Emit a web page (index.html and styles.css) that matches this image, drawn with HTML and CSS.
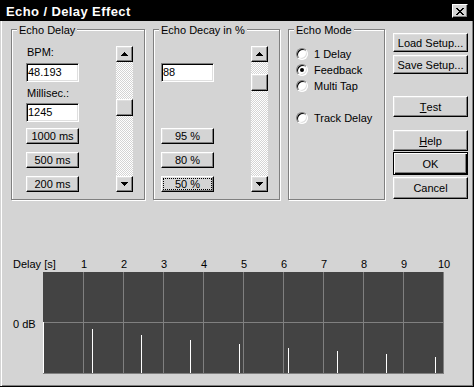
FILE: index.html
```html
<!DOCTYPE html>
<html lang="en">
<head>
    <meta charset="UTF-8">
    <title>Echo / Delay Effect</title>
    <link rel="stylesheet" href="styles.css">
</head>
<body>
    <div class="window">
        <div class="titlebar">
            <span class="title">Echo / Delay Effect</span>
            <span class="close">
                <svg width="8" height="7" viewBox="0 0 8 7" shape-rendering="crispEdges">
                    <path d="M0 0h2v1H0zM6 0h2v1H6zM1 1h2v1H1zM5 1h2v1H5zM2 2h4v1H2zM3 3h2v1H3zM2 4h4v1H2zM1 5h2v1H1zM5 5h2v1H5zM0 6h2v1H0zM6 6h2v1H6z" fill="#000"/>
                </svg>
            </span>
        </div>

        <div class="content">
            <div class="group delay">
                <span class="legend">Echo Delay</span>
                <div class="fields">
                    <span class="lbl">BPM:</span>
                    <input class="field first" value="48.193">
                    <span class="lbl second">Millisec.:</span>
                    <input class="field last" value="1245">
                    <div class="presets">
                        <span class="btn small">1000 ms</span>
                        <span class="btn small">500 ms</span>
                        <span class="btn small">200 ms</span>
                    </div>
                </div>
                <div class="scroll">
                    <span class="btn arrow"><svg width="7" height="4" viewBox="0 0 7 4" shape-rendering="crispEdges"><path d="M3 0h1v1h1v1h1v1h1v1H0V3h1V2h1V1h1z"/></svg></span>
                    <div class="track"><span class="btn thumb" style="margin-top: 37px"></span></div>
                    <span class="btn arrow"><svg width="7" height="4" viewBox="0 0 7 4" shape-rendering="crispEdges"><path d="M0 0h7v1H6v1H5v1H4v1H3V3H2V2H1V1H0z"/></svg></span>
                </div>
            </div>

            <div class="group decay">
                <span class="legend">Echo Decay in %</span>
                <div class="fields">
                    <input class="field" value="88">
                    <div class="presets">
                        <span class="btn small">95 %</span>
                        <span class="btn small">80 %</span>
                        <span class="btn small focus">50 %</span>
                    </div>
                </div>
                <div class="scroll">
                    <span class="btn arrow"><svg width="7" height="4" viewBox="0 0 7 4" shape-rendering="crispEdges"><path d="M3 0h1v1h1v1h1v1h1v1H0V3h1V2h1V1h1z"/></svg></span>
                    <div class="track"><span class="btn thumb" style="margin-top: 12px"></span></div>
                    <span class="btn arrow"><svg width="7" height="4" viewBox="0 0 7 4" shape-rendering="crispEdges"><path d="M0 0h7v1H6v1H5v1H4v1H3V3H2V2H1V1H0z"/></svg></span>
                </div>
            </div>

            <div class="group mode">
                <span class="legend">Echo Mode</span>
                <div class="radios">
                    <div class="option"><span class="radio"></span>1 Delay</div>
                    <div class="option"><span class="radio on"></span>Feedback</div>
                    <div class="option"><span class="radio"></span>Multi Tap</div>
                    <div class="option track-delay"><span class="radio"></span>Track Delay</div>
                </div>
            </div>

            <div class="side">
                <span class="btn load">Load Setup...</span>
                <span class="btn save">Save Setup...</span>
                <span class="btn test"><u>T</u>est</span>
                <span class="btn help"><u>H</u>elp</span>
                <span class="btn ok">OK</span>
                <span class="btn cancel">Cancel</span>
            </div>
        </div>

        <svg class="chart" width="474" height="130" viewBox="0 0 474 130">
            <g class="labels">
                <text x="13" y="18">Delay [s]</text>
                <text x="84" y="18" text-anchor="middle">1</text>
                <text x="124" y="18" text-anchor="middle">2</text>
                <text x="164" y="18" text-anchor="middle">3</text>
                <text x="204" y="18" text-anchor="middle">4</text>
                <text x="244" y="18" text-anchor="middle">5</text>
                <text x="284" y="18" text-anchor="middle">6</text>
                <text x="324" y="18" text-anchor="middle">7</text>
                <text x="364" y="18" text-anchor="middle">8</text>
                <text x="404" y="18" text-anchor="middle">9</text>
                <text x="444" y="18" text-anchor="middle">10</text>
                <text x="13" y="78">0 dB</text>
            </g>
            <rect x="43" y="22" width="401" height="102" fill="#434343"/>
            <!-- grid -->
            <path class="grid" d="M83.5 22V124M123.5 22V124M163.5 22V124M203.5 22V124M243.5 22V124M283.5 22V124M323.5 22V124M363.5 22V124M403.5 22V124M443.5 22V124M43 72.5H444M43 123.5H444"/>
            <!-- echo taps -->
            <path class="taps" d="M43.5 72V123M92.5 79V123M141.5 85V123M190.5 90V123M239.5 94V123M288.5 98V123M337.5 101V123M386.5 104V123M435.5 107V123"/>
        </svg>
    </div>
</body>
</html>
```

FILE: styles.css
```css
body {
    margin: 0;
    background: #d4d4d4;
    font-family: "Liberation Sans", Arial, sans-serif;
    font-size: 11px;
    color: #000;
}
.window {
    width: 474px;
    height: 387px;
    box-sizing: border-box;
    background: #d4d4d4;
    border-right: 1px solid #000;
    border-bottom: 1px solid #000;
    box-shadow: inset 1px 0 #d4d4d4, inset 2px 0 #fff, inset -1px -1px #808080;
}
.titlebar {
    height: 21px;
    background: #000;
    display: flex;
    justify-content: space-between;
    align-items: flex-start;
}
.title {
    color: #fff;
    font-weight: bold;
    font-size: 13px;
    line-height: 14px;
    letter-spacing: 0.4px;
    margin: 5px 0 0 6px;
}
.close {
    width: 16px;
    height: 14px;
    margin: 4px 5px 0 0;
    box-sizing: border-box;
    display: flex;
    align-items: center;
    justify-content: center;
    background: #d4d4d4;
    border: 1px solid;
    border-color: #fff #000 #000 #fff;
    box-shadow: inset -1px -1px #808080;
}

.content {
    display: flex;
    padding: 8px 0 0 11px;
}
.group {
    position: relative;
    display: flex;
    height: 171px;
    box-sizing: border-box;
    border: 1px solid #808080;
    box-shadow: 1px 1px #fff, inset 1px 1px #fff;
    margin-right: 8px;
}
.delay { width: 134px; }
.decay { width: 127px; }
.mode { width: 97px; }
.legend {
    position: absolute;
    top: -6px;
    left: 5px;
    padding: 0 2px;
    line-height: 13px;
    background: #d4d4d4;
    white-space: nowrap;
}

.fields {
    display: flex;
    flex-direction: column;
    width: 53px;
    padding-bottom: 7px;
}
.delay .fields {
    margin-left: 14px;
    padding-top: 16px;
}
.decay .fields {
    margin-left: 7px;
    padding-top: 33px;
}
.lbl {
    line-height: 13px;
    padding-left: 1px;
}
.lbl.second { margin-top: 5px; }
.field {
    width: 53px;
    height: 19px;
    box-sizing: border-box;
    margin: 0;
    padding: 0 1px 2px 1px;
    font: inherit;
    color: #000;
    background: #fff;
    border: 1px solid;
    border-color: #808080 #fff #fff #808080;
    box-shadow: inset 1px 1px #000, inset -1px -1px #dfdfdf;
    outline: none;
}
.field.first { margin-top: 4px; }
.field.last { margin-top: 3px; }
.presets {
    margin-top: auto;
    display: flex;
    flex-direction: column;
    gap: 8px;
}

.btn {
    display: flex;
    align-items: center;
    justify-content: center;
    box-sizing: border-box;
    background: #d4d4d4;
    border: 1px solid;
    border-color: #fff #000 #000 #fff;
    box-shadow: inset -1px -1px #808080, inset 1px 1px #dfdfdf;
    white-space: nowrap;
}
.btn.small { height: 16px; }
.btn.focus {
    outline: 1px dotted #000;
    outline-offset: -3px;
}

.scroll {
    display: flex;
    flex-direction: column;
    width: 17px;
    margin: 16px 0 7px 37px;
}
.arrow { height: 16px; }
.track {
    flex: 1;
    background: repeating-conic-gradient(#fff 0 25%, #d4d4d4 0 50%) 0 0 / 2px 2px;
}
.thumb { height: 17px; }

.radios {
    padding: 16px 0 0 7px;
}
.option {
    display: flex;
    align-items: center;
    gap: 6px;
    height: 16px;
}
.option.track-delay { margin-top: 16px; }
.radio {
    position: relative;
    width: 12px;
    height: 12px;
    box-sizing: border-box;
    border-radius: 50%;
    background: #fff;
    border: 1px solid;
    border-color: #808080 #fff #fff #808080;
    box-shadow: inset 1px 1px #000, inset -1px -1px #dfdfdf;
}
.radio.on::after {
    content: "";
    position: absolute;
    left: 3px;
    top: 3px;
    width: 4px;
    height: 4px;
    border-radius: 50%;
    background: #000;
}

.side {
    display: flex;
    flex-direction: column;
    width: 75px;
}
.load { margin-top: 4px; height: 19px; }
.save { margin-top: 3px; height: 19px; }
.test { margin-top: 22px; height: 21px; }
.help { margin-top: 13px; height: 21px; }
.ok {
    margin-top: 1px;
    height: 23px;
    border-color: #000;
    box-shadow: inset 1px 1px #fff, inset -1px -1px #000, inset -2px -2px #808080;
}
.cancel { margin-top: 2px; height: 22px; }

.chart {
    display: block;
    margin-top: 50px;
}
.labels {
    font-family: "Liberation Sans", Arial, sans-serif;
    font-size: 11px;
    fill: #000;
}
.grid {
    stroke: #808080;
    stroke-width: 1;
    fill: none;
}
.taps {
    stroke: #fff;
    stroke-width: 1;
    fill: none;
}
```
